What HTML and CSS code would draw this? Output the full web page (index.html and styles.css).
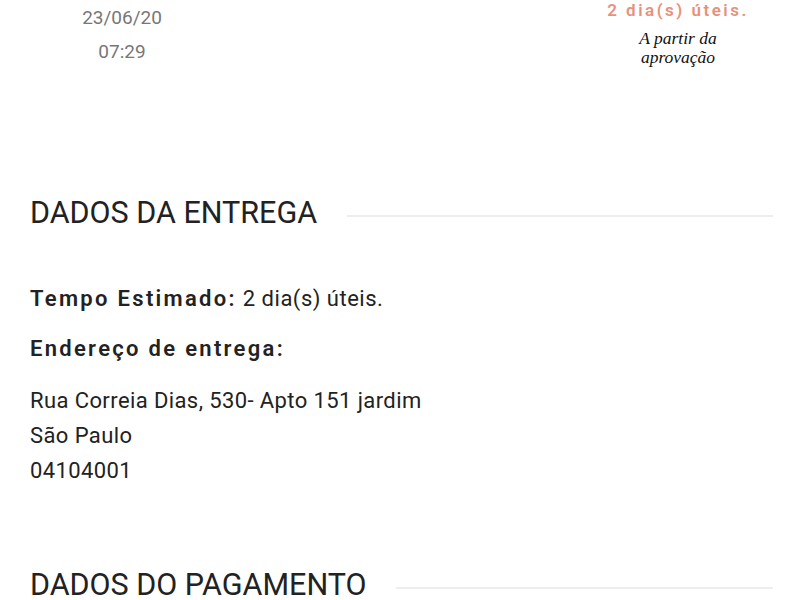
FILE: index.html
```html
<!DOCTYPE html>
<html lang="pt-BR">
<head>
<meta charset="utf-8">
<title>Pedido</title>
<link rel="stylesheet" href="styles.css">
</head>
<body>
<div class="page">
  <div class="summary">
    <div class="summary-date">
      <span>23/06/20</span>
      <span>07:29</span>
    </div>
    <div class="summary-deadline">
      <span class="deadline-value">2 dia(s) úteis.</span>
      <span class="deadline-note">A partir da<br>aprovação</span>
    </div>
  </div>

  <section class="block">
    <h2 class="block-title">DADOS DA ENTREGA</h2>
    <p class="info"><strong>Tempo Estimado:</strong> 2 dia(s) úteis.</p>
    <p class="info info-label"><strong>Endereço de entrega:</strong></p>
    <p class="address">Rua Correia Dias, 530- Apto 151 jardim<br>São Paulo<br>04104001</p>
  </section>

  <section class="block block-next">
    <h2 class="block-title">DADOS DO PAGAMENTO</h2>
  </section>
</div>
</body>
</html>
```

FILE: styles.css
```css
html, body {
  margin: 0;
  padding: 0;
  background: #fff;
}

body {
  font-family: Roboto, "Liberation Sans", sans-serif;
  color: #222;
  overflow: hidden;
}

.page {
  padding: 0 27px 0 30px;
}

/* order summary: date on the left, delivery deadline on the right */
.summary {
  display: flex;
  justify-content: space-between;
  height: 100px;
}

.summary-date {
  width: 184px;
  display: flex;
  flex-direction: column;
  align-items: center;
  gap: 12px;
  padding-top: 7px;
  font-size: 19px;
  line-height: 22px;
  color: #777;
}

.summary-deadline {
  width: 190px;
  display: flex;
  flex-direction: column;
  align-items: center;
  text-align: center;
}

.deadline-value {
  font-size: 17px;
  font-weight: 600;
  letter-spacing: 2.5px;
  line-height: 20px;
  color: #e8917a;
}

.deadline-note {
  margin-top: 9px;
  font-family: "Liberation Serif", serif;
  font-style: italic;
  font-size: 17.5px;
  line-height: 19px;
  color: #111;
}

/* sections */
.block {
  padding-top: 93px;
}

.block-next {
  padding-top: 77px;
}

.block-title {
  display: flex;
  align-items: center;
  gap: 30px;
  margin: 0 0 51px;
  font-size: 30.5px;
  font-weight: 400;
  line-height: 40px;
  color: #222;
}

.block-title::after {
  content: "";
  flex: 1;
  height: 2px;
  margin-top: 5px;
  background: #eeeeee;
}

.info {
  margin: 0 0 20px;
  font-size: 22px;
  line-height: 30px;
  letter-spacing: 0.5px;
  color: #222;
}

.info-label {
  margin-bottom: 19px;
}

.info strong {
  font-weight: 600;
  letter-spacing: 2.3px;
}

.address {
  margin: 0;
  font-size: 22px;
  line-height: 35px;
  letter-spacing: 0.4px;
  color: #222;
}
```
